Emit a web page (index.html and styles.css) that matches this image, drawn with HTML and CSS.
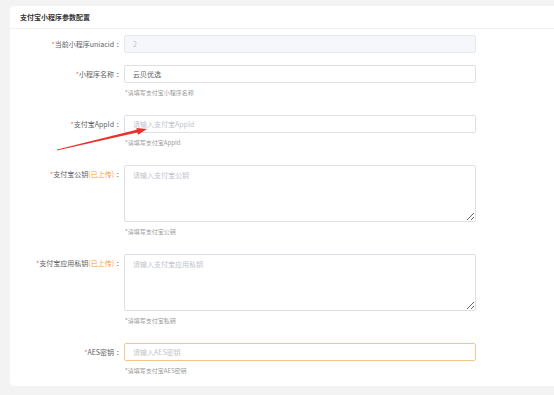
FILE: index.html
```html
<!DOCTYPE html>
<html lang="zh">
<head>
<meta charset="utf-8">
<link rel="stylesheet" href="styles.css">
</head>
<body>
<div class="card">
  <div class="card-head">支付宝小程序参数配置</div>
  <div class="card-body">
    <div class="row">
      <label class="label"><span class="req">*</span>当前小程序uniacid<span class="colon">：</span></label>
      <div class="field"><input class="input disabled" value="2" disabled></div>
    </div>
    <div class="row">
      <label class="label"><span class="req">*</span>小程序名称<span class="colon">：</span></label>
      <div class="field"><input class="input" value="云贝优选"><div class="hint">*请填写支付宝小程序名称</div></div>
    </div>
    <div class="row">
      <label class="label"><span class="req">*</span>支付宝AppId<span class="colon">：</span></label>
      <div class="field"><input class="input" placeholder="请输入支付宝AppId"><div class="hint">*请填写支付宝AppId</div></div>
    </div>
    <div class="row">
      <label class="label"><span class="req">*</span>支付宝公钥<span class="up">(已上传)</span><span class="colon">：</span></label>
      <div class="field"><textarea class="textarea" placeholder="请输入支付宝公钥"></textarea><div class="hint">*请填写支付宝公钥</div></div>
    </div>
    <div class="row">
      <label class="label"><span class="req">*</span>支付宝应用私钥<span class="up">(已上传)</span><span class="colon">：</span></label>
      <div class="field"><textarea class="textarea" placeholder="请输入支付宝应用私钥"></textarea><div class="hint">*请填写支付宝私钥</div></div>
    </div>
    <div class="row last">
      <label class="label"><span class="req">*</span>AES密钥<span class="colon">：</span></label>
      <div class="field"><input class="input focus" placeholder="请输入AES密钥"><div class="hint">*请填写支付宝AES密钥</div></div>
    </div>
  </div>
</div>
<svg class="arrow" width="554" height="395" viewBox="0 0 554 395">
  <polygon points="56.8,150.5 57.2,149.5 136.7,129.8 136.5,127.9 147,129 138.1,134.7 137.3,132.6" fill="#e8322b"/>
</svg>
</body>
</html>
```

FILE: styles.css
```css
html, body {
  margin: 0;
  padding: 0;
}
body {
  background: #f3f3f3;
  width: 554px;
  height: 395px;
  overflow: hidden;
  position: relative;
  font-family: "Noto Sans CJK SC", "Noto Sans", sans-serif;
  color: #606266;
}
.card {
  margin: 6px 0 0 10px;
  width: 560px;
  background: #fff;
  border-radius: 4px;
  padding-bottom: 5px;
}
.card-head {
  height: 22px;
  border-bottom: 1px solid #f0f0f0;
  padding-left: 10px;
  display: flex;
  align-items: center;
  font-size: 7px;
  font-weight: bold;
  color: #333;
}
.card-body {
  padding-top: 6px;
}
.row {
  display: grid;
  grid-template-columns: 114px 352px;
  margin-bottom: 12px;
}
.row.last {
  margin-bottom: 0;
}
.label {
  text-align: right;
  font-size: 7px;
  line-height: 18px;
  padding-right: 1px;
  color: #606266;
}
.colon {
  margin-left: 2px;
}
.req {
  color: #f56c6c;
}
.up {
  color: #ff9a2e;
}
.field {
  display: flex;
  flex-direction: column;
}
.input {
  box-sizing: border-box;
  height: 18px;
  width: 352px;
  margin: 0;
  border: 1px solid #dcdfe6;
  border-radius: 2px;
  padding: 0 8px;
  font-family: inherit;
  font-size: 7px;
  color: #606266;
  background: #fff;
  outline: none;
}
.input.disabled {
  background: #f5f7fa;
  border-color: #e4e7ed;
  color: #c0c4cc;
}
.input.focus {
  border-color: #f5c48c;
}
.textarea {
  box-sizing: border-box;
  height: 57px;
  width: 352px;
  margin: 0;
  border: 1px solid #dcdfe6;
  border-radius: 2px;
  padding: 4px 8px;
  font-family: inherit;
  font-size: 7px;
  line-height: 11px;
  color: #606266;
  resize: vertical;
  outline: none;
  display: block;
}
.input::placeholder, .textarea::placeholder {
  color: #c0c4cc;
}
.hint {
  font-size: 6px;
  line-height: 20px;
  color: #999;
  padding-left: 1px;
}
.arrow {
  position: absolute;
  left: 0;
  top: 0;
  pointer-events: none;
}
```
